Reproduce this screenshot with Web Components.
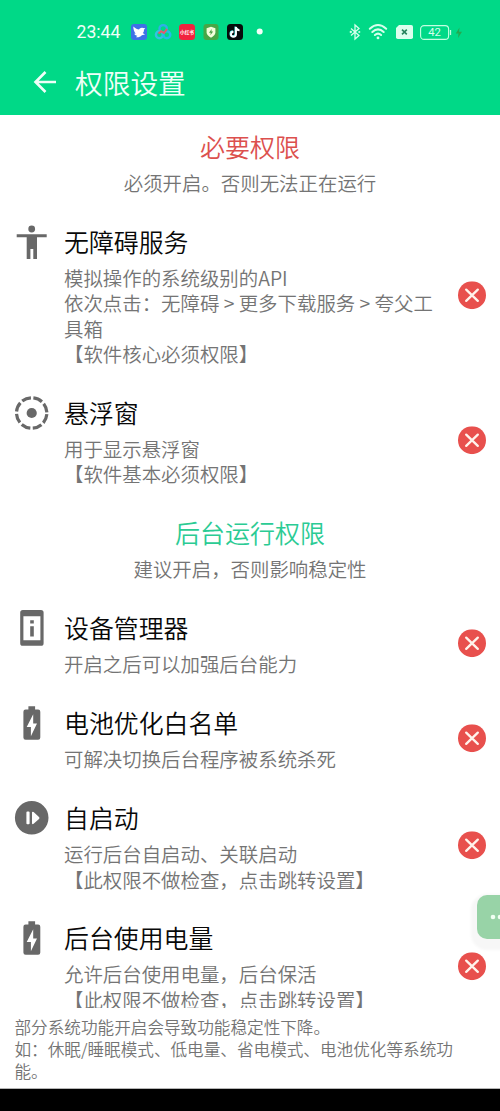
<!DOCTYPE html>
<html lang="zh-CN">
<head>
<meta charset="utf-8">
<title>权限设置</title>
<style>
html,body{margin:0;height:100%;background:#fff}
body{font-family:"Noto Sans CJK SC","Liberation Sans",sans-serif;font-weight:350;overflow:hidden}
</style>
</head>
<body>
<permission-screen></permission-screen>
<script>
const define = (name, html) => {
  customElements.define(name, class extends HTMLElement {
    constructor() {
      super();
      const t = document.createElement('template');
      t.innerHTML = html;
      this.attachShadow({mode: 'open'}).append(t.content.cloneNode(true));
    }
  });
};

const icons = {
  person: '<circle cx="16.7" cy="4" r="3.4"/><path d="M1.7 9.2H31.7V12.200H22V34H18.3V24H15.4V34H11.7V12.200H1.7Z"/>',
  float: '<circle cx="16.7" cy="17" r="5.1"/><circle cx="16.7" cy="17" r="15.2" fill="none" stroke="currentColor" stroke-width="3.2" stroke-dasharray="9.4 2.54" stroke-dashoffset="-1.27"/>',
  device: '<path fill-rule="evenodd" d="M7.8-1H26a2.6 2.6 0 0 1 2.6 2.6V32.2A2.6 2.6 0 0 1 26 34.8H7.8a2.6 2.6 0 0 1-2.6-2.6V1.6A2.6 2.6 0 0 1 7.8-1ZM8.4 5.2V29.2H25.4V5.2ZM15.2 9.2h3.6v3.4h-3.6ZM15.2 15.2h3.6v10.2h-3.6Z"/>',
  battery: '<path fill-rule="evenodd" d="M13.4 .3h6.7v3.2h3a2.2 2.2 0 0 1 2.2 2.2v25.8a2.2 2.2 0 0 1-2.2 2.2H10.6a2.2 2.2 0 0 1-2.2-2.2V5.7a2.2 2.2 0 0 1 2.2-2.2h2.8ZM18.2 8.2L11.7 21h4.2v9.3L22 17.6h-3.8Z"/>',
  start: '<path fill-rule="evenodd" d="M16.7 0A16.8 16.8 0 1 0 16.7 33.6A16.8 16.8 0 1 0 16.7 0ZM12.400 10.600h1.200q1 0 1 1v10.600q0 1-1 1h-1.200q-1 0-1-1v-10.600q0-1 1-1ZM17 11.200Q17.500 10.200 18.600 11L24 15.900Q25 16.900 24 17.900L18.600 22.800Q17.500 23.600 17 22.600Z"/>'
};

customElements.define('row-icon', class extends HTMLElement {
  constructor() {
    super();
    this.attachShadow({mode: 'open'});
  }
  connectedCallback() {
    this.shadowRoot.innerHTML = `<style>:host{display:block;width:34px;height:34px;color:#686868}svg{display:block;overflow:visible}</style>
    <svg width="34" height="34" viewBox="0 0 34 34" fill="currentColor">${icons[this.getAttribute('name')]}</svg>`;
  }
});

define('denied-mark', `<style>:host{display:block;width:28px;height:28px}svg{display:block}</style>
<svg width="28" height="28" viewBox="0 0 28 28"><circle cx="14" cy="14" r="14" fill="#e8504d"/><path d="M8.2 8.4L19.8 19.7M19.8 8.4L8.2 19.7" stroke="#fff3ec" stroke-width="2.3" stroke-linecap="round"/></svg>`);

define('status-bar', `<style>
:host{display:flex;align-items:center;height:24px;padding:20px 35px 0 76.5px;color:#effff8;font-family:Roboto,sans-serif;font-weight:400}
time{font-size:17.600px;line-height:24px;width:54.5px}
.apps{display:flex;gap:8px;align-items:center}
.right{display:flex;align-items:center;margin-left:auto}
svg{display:block;overflow:visible}
</style>
<time>23:44</time>
<div class="apps">
<svg width="16" height="16" viewBox="0 0 16 16"><rect width="16" height="16" rx="3" fill="#3f70e6"/><path d="M2.300 2.600C4.500 4.600 6.300 5.400 8 5.500 8.900 3.900 10.600 3.200 12 4L14.300 4.200 12.900 5.700C13.100 7.200 12.600 8.300 11.700 9.100L14 10.600 10.800 11.300C9.400 13 7.300 13.600 5 13.300L6.300 11.800C4.700 11.600 3.700 10.900 3.200 9.800L4.700 9.600C3.200 8 2.300 5.600 2.300 2.600Z" fill="#fff"/></svg>
<svg width="16" height="16" viewBox="0 0 16 16" fill="none" stroke-width="2.400"><circle cx="8.200" cy="4.800" r="3.700" stroke="#31aee8"/><circle cx="4.400" cy="10.800" r="3.500" stroke="#35bfe4"/><circle cx="11.800" cy="10.800" r="3.500" stroke="#20bce9"/><path d="M3.500 9.500L6.200 7.200 9 9 12 5" stroke="#e75a66" stroke-width="2"/></svg>
<svg width="16" height="16" viewBox="0 0 16 16"><rect width="16" height="16" rx="3.500" fill="#f2233f"/><text x="8" y="9.900" text-anchor="middle" font-family="Noto Sans CJK SC" font-weight="700" font-size="4.700" fill="#fff">小红书</text></svg>
<svg width="16" height="16" viewBox="0 0 16 16"><rect x=".5" width="15" height="16" rx="3" fill="#48a646"/><path d="M8 2.700L12.400 4.200V8.500Q12.200 11.500 8 13.700Q3.800 11.500 3.600 8.500V4.200Z" fill="#f3ffdc"/><path d="M8.700 5L6 8.700H7.800L7.300 11.300 10.200 7.500H8.400Z" fill="#4b9e45"/></svg>
<svg width="16" height="16" viewBox="0 0 16 16"><rect width="16" height="16" rx="3.500" fill="#080b0b"/><path d="M8.800 2.800V10a2.500 2.500 0 1 1-2.500-2.500M8.800 3.200Q9.400 6 12.400 6.200" fill="none" stroke="#55f0ec" stroke-width="1.900" transform="translate(-.4 -.3)"/><path d="M9 3V10.200a2.500 2.500 0 1 1-2.500-2.500M9 3.400Q9.600 6.200 12.600 6.400" fill="none" stroke="#fff" stroke-width="1.900"/></svg>
<svg width="16" height="16" viewBox="0 0 16 16"><circle cx="8.700" cy="7.600" r="3" fill="#f3fff9"/></svg>
</div>
<div class="right">
<svg width="10" height="16" viewBox="0 0 10 16" fill="none" stroke="#d7ffec" stroke-width="1.300"><path d="M1 4.500L9 11.400 5 15V1L9 4.500 1 11.500"/><circle cx=".8" cy="8" r=".5"/><circle cx="9.300" cy="8" r=".4"/></svg>
<svg style="margin-left:9px" width="18" height="16" viewBox="0 0 18 16" fill="none" stroke="#d7ffec" stroke-width="2" stroke-linecap="round"><path d="M.8 4.800Q9-2.800 17.200 4.800M3.300 8Q9 2.800 14.700 8M5.900 11Q9 8.300 12.100 11"/><circle cx="9" cy="13.900" r="1.400" fill="#d7ffec" stroke="none"/></svg>
<svg style="margin-left:8.500px" width="17" height="14" viewBox="0 0 17 14"><path d="M3 0H15.200Q17 0 17 1.800V12.200Q17 14 15.200 14H1.800Q0 14 0 12.200V3Z" fill="#dbffee"/><path d="M6 4.600L10.800 9.400M10.800 4.600L6 9.400" stroke="#26845d" stroke-width="1.600"/></svg>
<svg style="margin-left:7.500px" width="45" height="15" viewBox="0 0 45 15"><rect x=".6" y=".6" width="28" height="13.800" rx="3.500" fill="none" stroke="#c3ffe1" stroke-width="1.100"/><path d="M30.500 5v5" stroke="#c3ffe1" stroke-width="1.300"/><text x="14.500" y="11.400" text-anchor="middle" font-family="Roboto" font-size="11.300" fill="#d7ffec">42</text><path d="M39.500 2.500L35.800 8.500H38.500L38 13 42 6.800H39Z" fill="#23a950"/></svg>
</div>`);

define('app-bar', `<style>
:host{display:block;height:115px;background:#00d987;box-sizing:border-box}
nav{display:flex;align-items:center;height:76px;padding-left:32.500px;box-sizing:border-box}
svg{display:block;margin-right:18.500px}
h1{margin:0;font-size:27.700px;line-height:40px;font-weight:350;color:#effff8}
</style><status-bar></status-bar><nav>
<svg width="24" height="24" viewBox="0 0 24 24" fill="none" stroke="#effff8" stroke-width="2.600"><path d="M23 12H2.500M12.500 2L2.500 12 12.500 22"/></svg>
<h1><slot></slot></h1></nav>`);

define('section-heading', `<style>
:host{display:block;height:95px;box-sizing:border-box;padding-top:16px;text-align:center;color:var(--accent)}
h2{margin:0;font-size:25px;line-height:32px;font-weight:350}
p{margin:8.250px 0 0;font-size:19.430px;line-height:25.500px;color:#747474}
</style><h2><slot></slot></h2><p><slot name="note"></slot></p>`);

define('permission-item', `<style>
:host{display:flex;align-items:flex-start;box-sizing:border-box;padding:16px 14px 13.200px 15px}
.text{width:380px;margin-left:15px}
h3{margin:0 0 8.250px;font-size:24.900px;line-height:32px;font-weight:350;color:#080808}
p{margin:0;font-size:19.430px;line-height:25.450px;color:#747474;white-space:pre-line}
denied-mark{align-self:center;margin-left:auto;transform:translateY(-.8px)}
</style><slot name="icon"></slot><div class="text"><h3><slot name="title"></slot></h3><p><slot></slot></p></div><denied-mark></denied-mark>`);

define('foot-note', `<style>
:host{display:block;height:81px;box-sizing:border-box;padding:7.500px 40px 0 14.500px;background:#fff;border-bottom:1px solid #b5b5b5;font-size:16.620px;line-height:22.200px;color:#747474;white-space:pre-line}
</style><slot></slot>`);

define('float-button', `<style>
:host{display:block;position:absolute;left:477px;top:895px;width:46px;height:44px;border-radius:10px;background:#98d3a7;box-shadow:0 5px 3px 6px #f7f7f7}
svg{display:block}
</style><svg width="46" height="44" viewBox="0 0 46 44" fill="#f1fff3"><circle cx="16" cy="22" r="2.300"/><circle cx="23" cy="22" r="2.300"/><circle cx="30" cy="22" r="2.300"/></svg>`);

define('permission-screen', `<style>
:host{display:flex;flex-direction:column;width:500px;height:1111px;position:relative;overflow:hidden;background:#fff}
main{flex:1;min-height:0;overflow:hidden}
main>:first-child{margin-top:-1.500px}
app-bar,foot-note{flex:none}
.sys{height:22px;background:#000;flex:none}
</style>
<app-bar>权限设置</app-bar>
<main>
<section-heading style="--accent:#dc504e">必要权限<span slot="note">必须开启。否则无法正在运行</span></section-heading>
<permission-item><row-icon slot="icon" name="person"></row-icon><span slot="title">无障碍服务</span>模拟操作的系统级别的API
依次点击：无障碍 &gt; 更多下载服务 &gt; 夸父工具箱
【软件核心必须权限】</permission-item>
<permission-item><row-icon slot="icon" name="float"></row-icon><span slot="title">悬浮窗</span>用于显示悬浮窗
【软件基本必须权限】</permission-item>
<section-heading style="--accent:#2bcb94">后台运行权限<span slot="note">建议开启，否则影响稳定性</span></section-heading>
<permission-item><row-icon slot="icon" name="device"></row-icon><span slot="title">设备管理器</span>开启之后可以加强后台能力</permission-item>
<permission-item><row-icon slot="icon" name="battery"></row-icon><span slot="title">电池优化白名单</span>可解决切换后台程序被系统杀死</permission-item>
<permission-item><row-icon slot="icon" name="start"></row-icon><span slot="title">自启动</span>运行后台自启动、关联启动
【此权限不做检查，点击跳转设置】</permission-item>
<permission-item><row-icon slot="icon" name="battery"></row-icon><span slot="title">后台使用电量</span>允许后台使用电量，后台保活
【此权限不做检查，点击跳转设置】</permission-item>
</main>
<foot-note>部分系统功能开启会导致功能稳定性下降。
如：休眠/睡眠模式、低电量、省电模式、电池优化等系统功能。</foot-note>
<div class="sys"></div>
<float-button></float-button>`);
</script>
</body>
</html>
